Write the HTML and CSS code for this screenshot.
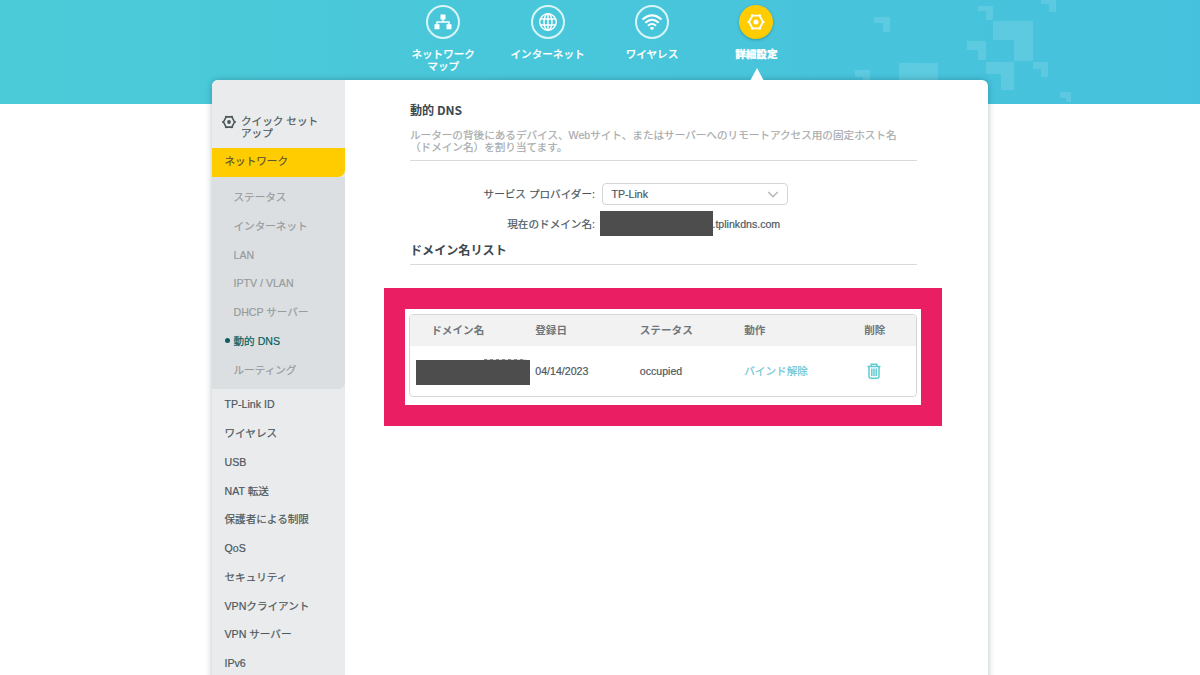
FILE: index.html
```html
<!DOCTYPE html>
<html lang="ja">
<head>
<meta charset="utf-8">
<title>動的 DNS</title>
<link rel="stylesheet" href="styles.css">
</head>
<body>
<svg class="pattern" width="400" height="104" viewBox="0 0 400 104" aria-hidden="true">
  <path d="M74 17h16v15h-7v-9h-9zM178 6h15v14h-7v-9h-8zM241 0h15v12h-7v-8h-8zM193 21h40v40h-19v-21h-21zM167 41h19v19h-8v-10h-11zM186 62h28v28h-13v-16h-15zM233 62h15v15h-7v-8h-8zM99 63h39v30h-39zM55 70h15v15h-7v-8h-8zM260 92h11v10h-5v-4h-6z"/>
</svg>
<header class="topbar">
  <nav class="tabs">
    <a class="tab">
      <span class="tab-icon"><svg width="18" height="18" viewBox="0 0 18 18"><path class="solid" d="M6.500 1.500h5v5h-5zM.5 11.300h5v5h-5zM12.500 11.300h5v5h-5z"/><path class="line" d="M9 6v3M3 12V9h12v3"/></svg></span>
      <span class="tab-label">ネットワーク<br>マップ</span>
    </a>
    <a class="tab">
      <span class="tab-icon"><svg width="20" height="20" viewBox="0 0 20 20"><circle class="line" cx="10" cy="10" r="8.300"/><ellipse class="line" cx="10" cy="10" rx="4" ry="8.300"/><path class="line" d="M10 2v16M2.500 7h15M2.500 13h15"/></svg></span>
      <span class="tab-label">インターネット</span>
    </a>
    <a class="tab">
      <span class="tab-icon"><svg width="22" height="18" viewBox="0 0 22 18"><path class="wave" d="M1.500 6.500Q11-1.700 20.500 6.500M4.300 9.700Q11 3.800 17.700 9.700M7 12.700Q11 9.300 15 12.700"/><path class="solid" d="M8.700 14.900Q11 13.200 13.300 14.900L11 17.200z"/></svg></span>
      <span class="tab-label">ワイヤレス</span>
    </a>
    <a class="tab active">
      <span class="tab-icon"><svg width="18" height="18" viewBox="0 0 18 18"><path class="gear" d="M5.500 2.600h7L16 9l-3.500 6.400h-7L2 9z"/><path class="gear" d="M4.500 1.400l1 1.700M13.500 1.400l-1 1.700M.5 9h2M15.500 9h2M4.500 16.600l1-1.700M13.500 16.600l-1-1.700"/><circle class="solid" cx="9" cy="9" r="2.500"/></svg></span>
      <span class="tab-label">詳細設定</span>
    </a>
  </nav>
</header>
<div class="card">
  <aside class="sidebar">
    <div class="quick">
      <svg width="14" height="14" viewBox="0 0 14 14"><path class="cog" d="M4.200 1.900h5.600L12.500 7l-2.700 5.100H4.200L1.500 7z"/><path class="cog" d="M3.500 1l.6 1M10.500 1l-.6 1M0 7h1.500M12.500 7H14M3.500 13l.6-1M10.500 13l-.6-1"/><circle class="cog-dot" cx="7" cy="7" r="1.900"/></svg>
      <span>クイック セット<br>アップ</span>
    </div>
    <div class="section">ネットワーク</div>
    <ul class="submenu">
      <li>ステータス</li>
      <li>インターネット</li>
      <li>LAN</li>
      <li>IPTV / VLAN</li>
      <li>DHCP サーバー</li>
      <li class="current">動的 DNS</li>
      <li>ルーティング</li>
    </ul>
    <ul class="menu">
      <li>TP-Link ID</li>
      <li>ワイヤレス</li>
      <li>USB</li>
      <li>NAT 転送</li>
      <li>保護者による制限</li>
      <li>QoS</li>
      <li>セキュリティ</li>
      <li>VPNクライアント</li>
      <li>VPN サーバー</li>
      <li>IPv6</li>
    </ul>
  </aside>
  <main class="content">
    <h1 class="title">動的 DNS</h1>
    <p class="desc">ルーターの背後にあるデバイス、Webサイト、またはサーバーへのリモートアクセス用の固定ホスト名<br>（ドメイン名）を割り当てます。</p>
    <div class="field provider">
      <label>サービス プロバイダー:</label>
      <div class="select"><span>TP-Link</span><svg width="12" height="8" viewBox="0 0 12 8"><path d="M1.200 2L6 6.500 10.800 2"/></svg></div>
    </div>
    <div class="field domain">
      <label>現在のドメイン名:</label>
      <span class="mask"></span><span class="suffix">.tplinkdns.com</span>
    </div>
    <h2 class="title list-title">ドメイン名リスト</h2>
    <div class="frame">
      <div class="table">
        <div class="row head"><span>ドメイン名</span><span>登録日</span><span>ステータス</span><span>動作</span><span>削除</span></div>
        <div class="row body">
          <span class="mask name"></span><span>04/14/2023</span><span>occupied</span><a class="link">バインド解除</a>
          <span class="trash"><svg width="14" height="16" viewBox="0 0 14 16"><path d="M.5 3.500h13M4.200 3.500V1.200h5.600v2.300M2 3.500v10q0 1.700 1.600 1.700h6.800q1.600 0 1.600-1.700v-10M4.800 5.500v7.500M7 5.500v7.500M9.200 5.500v7.500"/></svg></span>
        </div>
      </div>
    </div>
  </main>
</div>
</body>
</html>
```
FILE: styles.css
```css
* { box-sizing: border-box; }
body {
  margin: 0;
  width: 1200px;
  height: 675px;
  overflow: hidden;
  position: relative;
  background: linear-gradient(90deg, #4bcbd8, #46c1dd) 0 0 / 100% 104px no-repeat #fff;
  font: 10.6px/12px "Liberation Sans", "Noto Sans CJK JP", sans-serif;
  color: #4c585e;
  -webkit-text-stroke: .2px;
}
ul, h1, h2, p { margin: 0; padding: 0; }
ul { list-style: none; }
svg { display: block; flex: none; }
.pattern { position: absolute; left: 800px; top: 0; fill: #fff; fill-opacity: .12; }

.topbar { height: 80px; display: flex; padding-left: 391px; position: relative; }
.tabs { display: flex; }
.tab {
  width: 104.4px;
  height: 80px;
  padding-top: 5px;
  display: flex;
  flex-direction: column;
  align-items: center;
  position: relative;
  color: #fff;
  text-align: center;
}
.tab-icon {
  width: 34px;
  height: 34px;
  border: 2px solid #d8f6f7;
  border-radius: 50%;
  display: flex;
  align-items: center;
  justify-content: center;
}
.tab-label { margin-top: 9px; font-weight: 500; white-space: nowrap; }
.solid { fill: #fff; }
.line { fill: none; stroke: #fff; stroke-width: 1.4; }
.wave { fill: none; stroke: #fff; stroke-width: 2; }
.gear { fill: none; stroke: #fff; stroke-width: 1.9; }
.active .tab-icon { background: #fc0 content-box; background-clip: border-box; border-color: #fc0; box-shadow: 0 1px 3px rgba(0, 70, 80, .35); }
.active .tab-label { font-weight: 800; }
.active::after {
  content: "";
  position: absolute;
  left: 46px;
  bottom: -1px;
  z-index: 2;
  border: 7px solid transparent;
  border-top: 0;
  border-bottom: 13px solid #fff;
}

.card {
  position: relative;
  margin-left: 212px;
  width: 776px;
  height: 605px;
  display: flex;
  background: #fff;
  border-radius: 6px;
  box-shadow: 0 0 6px rgba(0, 40, 50, .3);
}
.sidebar { width: 133.400px; background: #e9ebec; border-radius: 6px 0 0 0; }
.quick { height: 67.500px; padding: 35px 0 0 10px; display: flex; gap: 5px; align-items: flex-start; }
.cog { fill: none; stroke: #4d5759; stroke-width: 1.6; }
.cog-dot { fill: #4d5759; }
.section { height: 29.500px; line-height: 27px; padding-left: 12.500px; background: #fc0; border-radius: 0 0 7px 0; color: #5c5430; }
.submenu { background: #dcdfe1; padding: 5px 0 6px; border-radius: 0 0 6px 0; color: #969b9e; }
.submenu li { height: 28.750px; line-height: 30px; padding-left: 21.500px; position: relative; }
.submenu .current { color: #075f62; }
.current::before {
  content: "";
  position: absolute;
  left: 12.500px;
  top: 12px;
  width: 5px;
  height: 5px;
  border-radius: 50%;
  background: #075f62;
}
.menu li { height: 28.780px; line-height: 30.600px; padding-left: 12.500px; }

.content { flex: 1; padding: 21px 0 0 64.600px; }
.title { width: 507px; font: 700 12.1px/17px "Noto Sans CJK JP", sans-serif; color: #3c484f; -webkit-text-stroke: 0; }
.desc { width: 507px; height: 43px; padding-top: 11px; border-bottom: 1px solid #d9dbdb; color: #a7abac; white-space: nowrap; }
.field { display: flex; align-items: center; }
.field label { width: 185px; text-align: right; }
.provider { margin-top: 22px; height: 22px; }
.select {
  margin-left: 7.500px;
  width: 186px;
  height: 22px;
  padding: 0 8px;
  display: flex;
  align-items: center;
  justify-content: space-between;
  border: 1px solid #d3d6d6;
  border-radius: 4px;
}
.select path { fill: none; stroke: #b9bcbd; stroke-width: 1.7; }
.domain { margin-top: 6px; height: 25px; }
.mask { background: #4d4d4d; width: 113.500px; height: 25px; }
.domain .mask { margin-left: 5px; }
.suffix { margin-left: -1px; }
.list-title { margin-top: 5px; height: 24px; border-bottom: 1px solid #d9dbdb; }
.frame {
  margin: 23px 0 0 -26px;
  width: 558px;
  height: 138px;
  padding: 5px 4px 8px 4.500px;
  border: 21px solid #e91e63;
}
.table { height: 83px; border: 1px solid #d3d8d6; border-radius: 4px; overflow: hidden; }
.row { display: grid; grid-template-columns: 104px 104.500px 104.500px 120px 1fr; align-items: center; padding-left: 20.800px; }
.head { height: 31px; padding-bottom: 2px; background: #f2f2f2; font-weight: 700; color: #70777a; -webkit-text-stroke: 0; }
.body { height: 49px; }
.name { margin-left: -15px; margin-top: 4px; position: relative; }
.name::before {
  content: "";
  position: absolute;
  left: 68px;
  top: -1px;
  width: 42px;
  height: 1px;
  background: repeating-linear-gradient(90deg, #888 0 3px, #ddd 3px 6px);
}
.link { color: #6bc7d5; }
.trash { padding-left: 3px; }
.trash path { fill: none; stroke: #5ecbd2; stroke-width: 1.5; }
```
